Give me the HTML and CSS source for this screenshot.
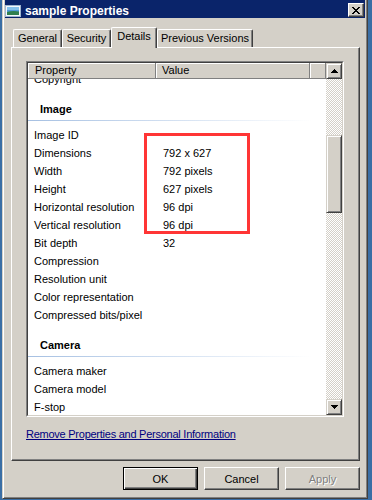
FILE: index.html
```html
<!DOCTYPE html>
<html lang="en">
<head>
  <meta charset="UTF-8">
  <title>sample Properties</title>
  <link rel="stylesheet" href="styles.css">
</head>
<body>

  <div class="window">
    <!-- Title bar -->
    <div class="titlebar">
      <svg class="title-icon" width="16" height="12" viewBox="0 0 16 12">
        <rect x="0.5" y="0.5" width="15" height="11" fill="#f4f8fc" stroke="#9fb6d0"/>
        <rect x="2" y="2" width="12" height="8" fill="#4f9bd9"/>
        <rect x="2" y="2" width="12" height="3" fill="#86c2ec"/>
        <path d="M2 7 Q7 5.5 14 6.5 V10 H2z" fill="#2f7f4f"/>
      </svg>
      <span class="title-text">sample Properties</span>
      <div class="close-btn">
        <svg width="8" height="7" viewBox="0 0 8 7" shape-rendering="crispEdges">
          <path d="M0 0h2v1H0z M6 0h2v1H6z M1 1h2v1H1z M5 1h2v1H5z M2 2h4v1H2z M3 3h2v1H3z M2 4h4v1H2z M1 5h2v1H1z M5 5h2v1H5z M0 6h2v1H0z M6 6h2v1H6z" fill="#000"/>
        </svg>
      </div>
    </div>

    <div class="content">
      <!-- Tabs -->
      <div class="tabs">
        <div class="tab tab-general">General</div>
        <div class="tab tab-security">Security</div>
        <div class="tab tab-details active">Details</div>
        <div class="tab tab-previous">Previous Versions</div>
      </div>

      <div class="panel">
        <div class="listview">
          <div class="list-inner">
            <div class="list-main">
              <div class="list-header">
                <div class="col col-prop">Property</div>
                <div class="col col-value">Value</div>
                <div class="col col-fill"></div>
              </div>
              <div class="list-body">
                <div class="list-scroll">
                  <div class="row"><span class="prop">Copyright</span><span class="val"></span></div>

                  <div class="group">
                    <div class="group-label">Image</div>
                    <div class="group-line"></div>
                  </div>
                  <div class="row"><span class="prop">Image ID</span><span class="val"></span></div>
                  <div class="row"><span class="prop">Dimensions</span><span class="val">792 x 627</span></div>
                  <div class="row"><span class="prop">Width</span><span class="val">792 pixels</span></div>
                  <div class="row"><span class="prop">Height</span><span class="val">627 pixels</span></div>
                  <div class="row"><span class="prop">Horizontal resolution</span><span class="val">96 dpi</span></div>
                  <div class="row"><span class="prop">Vertical resolution</span><span class="val">96 dpi</span></div>
                  <div class="row"><span class="prop">Bit depth</span><span class="val">32</span></div>
                  <div class="row"><span class="prop">Compression</span><span class="val"></span></div>
                  <div class="row"><span class="prop">Resolution unit</span><span class="val"></span></div>
                  <div class="row"><span class="prop">Color representation</span><span class="val"></span></div>
                  <div class="row"><span class="prop">Compressed bits/pixel</span><span class="val"></span></div>

                  <div class="group">
                    <div class="group-label">Camera</div>
                    <div class="group-line"></div>
                  </div>
                  <div class="row"><span class="prop">Camera maker</span><span class="val"></span></div>
                  <div class="row"><span class="prop">Camera model</span><span class="val"></span></div>
                  <div class="row"><span class="prop">F-stop</span><span class="val"></span></div>
                </div>
              </div>
            </div>

            <!-- Vertical scrollbar -->
            <div class="scrollbar">
              <div class="sb-btn">
                <svg width="7" height="4" viewBox="0 0 7 4" shape-rendering="crispEdges">
                  <path d="M3 0h1v1h1v1h1v1h1v1H0V3h1V2h1V1h1z" fill="#000"/>
                </svg>
              </div>
              <div class="sb-track">
                <div class="sb-thumb"></div>
              </div>
              <div class="sb-btn">
                <svg width="7" height="4" viewBox="0 0 7 4" shape-rendering="crispEdges">
                  <path d="M0 0h7v1H6v1H5v1H4v1H3V3H2V2H1V1H0z" fill="#000"/>
                </svg>
              </div>
            </div>
          </div>
          <div class="highlight"></div>
        </div>

        <div class="link-row">
          <a class="remove-link" href="#">Remove Properties and Personal Information</a>
        </div>
      </div>

      <!-- Dialog buttons -->
      <div class="buttons">
        <button class="btn btn-default">OK</button>
        <button class="btn">Cancel</button>
        <button class="btn" disabled>Apply</button>
      </div>
    </div>
  </div>

</body>
</html>
```

FILE: styles.css
```css
body {
  margin: 0;
  background: #3a6ea5;
  font-family: "Liberation Sans", Arial, sans-serif;
  font-size: 11px;
  color: #000;
  overflow: hidden;
}

.window {
  width: 366px;
  margin: -3px 0 0 2px;
  box-sizing: border-box;
  padding: 2px;
  background: #d4d0c8;
  border: 1px solid;
  border-color: #d4d0c8 #404040 #404040 #d4d0c8;
  box-shadow: inset 1px 1px #fff, inset -1px -1px #808080;
}

/* title bar */
.titlebar {
  height: 18px;
  display: flex;
  align-items: flex-start;
  background: #0a246a;
  color: #fff;
}
.title-icon {
  margin-top: 5px;
  flex: none;
}
.title-text {
  margin-left: 4px;
  padding-top: 2px;
  line-height: 18px;
  font-weight: bold;
  font-size: 12px;
}
.close-btn {
  margin: 3px 1px 0 auto;
  width: 16px;
  height: 14px;
  box-sizing: border-box;
  display: flex;
  align-items: center;
  justify-content: center;
  background: #d4d0c8;
  border: 1px solid;
  border-color: #fff #404040 #404040 #fff;
  box-shadow: inset -1px -1px #808080;
}

.content {
  padding: 9px 5px 6px 6px;
}

/* tabs */
.tabs {
  display: flex;
  align-items: flex-end;
  height: 20px;
  padding-left: 2px;
}
.tab {
  height: 18px;
  box-sizing: border-box;
  border-left: 1px solid #fff;
  border-top: 1px solid #fff;
  border-right: 1px solid #404040;
  box-shadow: inset -1px 0 #808080;
  border-radius: 2px 2px 0 0;
  text-align: center;
  line-height: 17px;
  background: #d4d0c8;
}
.tab-general { width: 49px; }
.tab-security { width: 49px; }
.tab-details { width: 46px; }
.tab-previous { width: 96px; }
.tab.active {
  height: 21px;
  margin-bottom: -1px;
  position: relative;
  z-index: 1;
  line-height: 16px;
}

/* panel */
.panel {
  height: 414px;
  box-sizing: border-box;
  padding: 13px 0 0 14px;
  border-left: 1px solid #fff;
  border-top: 1px solid #fff;
  border-right: 1px solid #404040;
  border-bottom: 1px solid #404040;
  box-shadow: inset -1px -1px #808080;
}

.listview {
  position: relative;
  width: 318px;
  height: 356px;
  box-sizing: border-box;
  border: 1px solid;
  border-color: #808080 #fff #fff #808080;
}
.list-inner {
  height: 100%;
  box-sizing: border-box;
  display: flex;
  background: #fff;
  border: 1px solid;
  border-color: #404040 #d4d0c8 #d4d0c8 #404040;
}
.list-main {
  flex: 1;
  display: flex;
  flex-direction: column;
  min-width: 0;
}

.list-header {
  display: flex;
  height: 16px;
  flex: none;
  position: relative;
  z-index: 1;
}
.col {
  box-sizing: border-box;
  height: 16px;
  line-height: 15px;
  background: #d4d0c8;
  border-right: 1px solid #808080;
  border-bottom: 1px solid #808080;
  box-shadow: inset 1px 1px #fff;
}
.col-prop { width: 128px; padding-left: 7px; }
.col-value { width: 154px; padding-left: 6px; }
.col-fill { flex: 1; }

.list-body {
  flex: 1;
  overflow: hidden;
}
.list-scroll {
  margin-top: -9px;
}
.row {
  display: flex;
  height: 18px;
  line-height: 18px;
  white-space: nowrap;
}
.prop {
  width: 128px;
  padding-left: 6px;
  box-sizing: border-box;
}
.val {
  padding-left: 7px;
}

.group {
  margin-top: 12px;
  margin-bottom: 5px;
}
.group-label {
  height: 18px;
  line-height: 18px;
  padding-left: 12px;
  font-weight: bold;
}
.group-line {
  margin-top: 2px;
  height: 1px;
  width: 284px;
  background: linear-gradient(to right, #a6c0e2, #dbe6f4 60%, #fff);
}

/* scrollbar */
.scrollbar {
  width: 16px;
  flex: none;
  display: flex;
  flex-direction: column;
}
.sb-btn, .sb-thumb {
  box-sizing: border-box;
  background: #d4d0c8;
  border: 1px solid;
  border-color: #d4d0c8 #404040 #404040 #d4d0c8;
  box-shadow: inset 1px 1px #fff, inset -1px -1px #808080;
}
.sb-btn {
  height: 16px;
  display: flex;
  align-items: center;
  justify-content: center;
}
.sb-track {
  flex: 1;
  background-image: conic-gradient(#fff 25%, #d4d0c8 0 50%, #fff 0 75%, #d4d0c8 0);
  background-size: 2px 2px;
}
.sb-thumb {
  margin-top: 56px;
  height: 78px;
}

/* red annotation box */
.highlight {
  position: absolute;
  left: 117px;
  top: 71px;
  width: 106px;
  height: 101px;
  box-sizing: border-box;
  border: 3px solid #ff3535;
}

.link-row {
  margin-top: 10px;
  height: 15px;
  line-height: 15px;
}
.remove-link {
  color: #000080;
  letter-spacing: -0.25px;
}

/* buttons */
.buttons {
  display: flex;
  justify-content: flex-end;
  gap: 6px;
  margin-top: 6px;
}
.btn {
  width: 75px;
  height: 23px;
  padding: 0;
  font-family: inherit;
  font-size: 11px;
  color: #000;
  background: #d4d0c8;
  border: 1px solid;
  border-color: #fff #404040 #404040 #fff;
  box-shadow: inset -1px -1px #808080;
  border-radius: 0;
}
.btn-default {
  border-color: #000;
  box-shadow: inset 1px 1px #fff, inset -1px -1px #404040, inset -2px -2px #808080;
}
.btn:disabled {
  color: #808080;
  text-shadow: 1px 1px #fff;
}
```
